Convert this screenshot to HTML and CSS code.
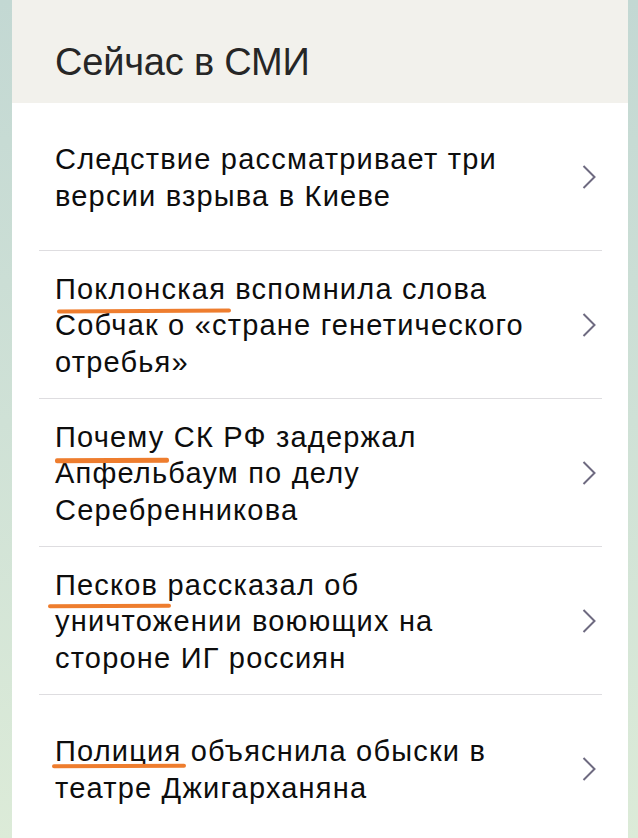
FILE: index.html
```html
<!DOCTYPE html>
<html lang="ru">
<head>
<meta charset="utf-8">
<title>Сейчас в СМИ</title>
<link rel="stylesheet" href="styles.css">
</head>
<body>
<section class="card">
  <header class="card-head">
    <h2 class="card-title">Сейчас в СМИ</h2>
  </header>
  <ul class="news">
    <li class="news-item">
      <a class="news-link" href="#">
        <span class="news-text">Следствие рассматривает три версии взрыва в Киеве</span>
        <svg class="chev" width="14" height="24" viewBox="0 0 14 24"><path d="M1.5 1 L12.5 12 L1.5 23" fill="none" stroke="currentColor" stroke-width="2"/></svg>
      </a>
    </li>
    <li class="news-item">
      <a class="news-link" href="#">
        <span class="news-text"><span class="mark mark-a">Поклонская</span> вспомнила слова Собчак о «стране генетического отребья»</span>
        <svg class="chev" width="14" height="24" viewBox="0 0 14 24"><path d="M1.5 1 L12.5 12 L1.5 23" fill="none" stroke="currentColor" stroke-width="2"/></svg>
      </a>
    </li>
    <li class="news-item">
      <a class="news-link" href="#">
        <span class="news-text"><span class="mark mark-b">Почему</span> СК РФ задержал Апфельбаум по делу Серебренникова</span>
        <svg class="chev" width="14" height="24" viewBox="0 0 14 24"><path d="M1.5 1 L12.5 12 L1.5 23" fill="none" stroke="currentColor" stroke-width="2"/></svg>
      </a>
    </li>
    <li class="news-item">
      <a class="news-link" href="#">
        <span class="news-text"><span class="mark mark-c">Песков</span> рассказал об уничтожении воюющих на стороне ИГ россиян</span>
        <svg class="chev" width="14" height="24" viewBox="0 0 14 24"><path d="M1.5 1 L12.5 12 L1.5 23" fill="none" stroke="currentColor" stroke-width="2"/></svg>
      </a>
    </li>
    <li class="news-item">
      <a class="news-link" href="#">
        <span class="news-text"><span class="mark mark-d">Полиция</span> объяснила обыски в театре Джигарханяна</span>
        <svg class="chev" width="14" height="24" viewBox="0 0 14 24"><path d="M1.5 1 L12.5 12 L1.5 23" fill="none" stroke="currentColor" stroke-width="2"/></svg>
      </a>
    </li>
  </ul>
</section>
</body>
</html>
```
FILE: styles.css
```css
html, body {
  margin: 0;
  padding: 0;
}
body {
  min-height: 838px;
  background: linear-gradient(180deg, #c3d8d3 0%, #cfe1d6 50%, #dcebd8 100%);
  font-family: "Liberation Sans", Arial, sans-serif;
  color: #0d0d0d;
}
.card {
  margin: 0 10px 0 12px;
  background: #fff;
  min-height: 838px;
}
.card-head {
  background: #f2f1ec;
  height: 103px;
  box-sizing: border-box;
  padding: 40px 0 0 43px;
}
.card-title {
  margin: 0;
  font-size: 38px;
  font-weight: 400;
  line-height: 44px;
  color: #262626;
  letter-spacing: -0.2px;
}
.news {
  list-style: none;
  margin: 0;
  padding: 0 26px 0 27px;
}
.news-item {
  border-bottom: 1px solid #dedde0;
}
.news-item:last-child {
  border-bottom: none;
}
.news-link {
  display: flex;
  align-items: center;
  min-height: 147px;
  box-sizing: border-box;
  padding: 2px 6px 0 16px;
  color: inherit;
  text-decoration: none;
}
.news-text {
  flex: 0 1 auto;
  font-size: 29px;
  line-height: 36.5px;
  letter-spacing: 1.2px;
  max-width: 471px;
}
.chev {
  flex: none;
  color: #6e6a80;
  margin-left: auto;
  margin-top: -2px;
}
.mark {
  position: relative;
}
.mark::after {
  content: "";
  position: absolute;
  height: 4px;
  border-radius: 2px;
  background: #ee7d2e;
  transform: rotate(-0.3deg);
}
.mark-a::after { left: 2px; right: -5px; top: 36px; }
.mark-b::after { left: 0; right: -4px; top: 37px; height: 5px; }
.mark-c::after { left: -7px; right: -13px; top: 35px; }
.mark-d::after { left: -3px; right: -5px; top: 29px; }
```
